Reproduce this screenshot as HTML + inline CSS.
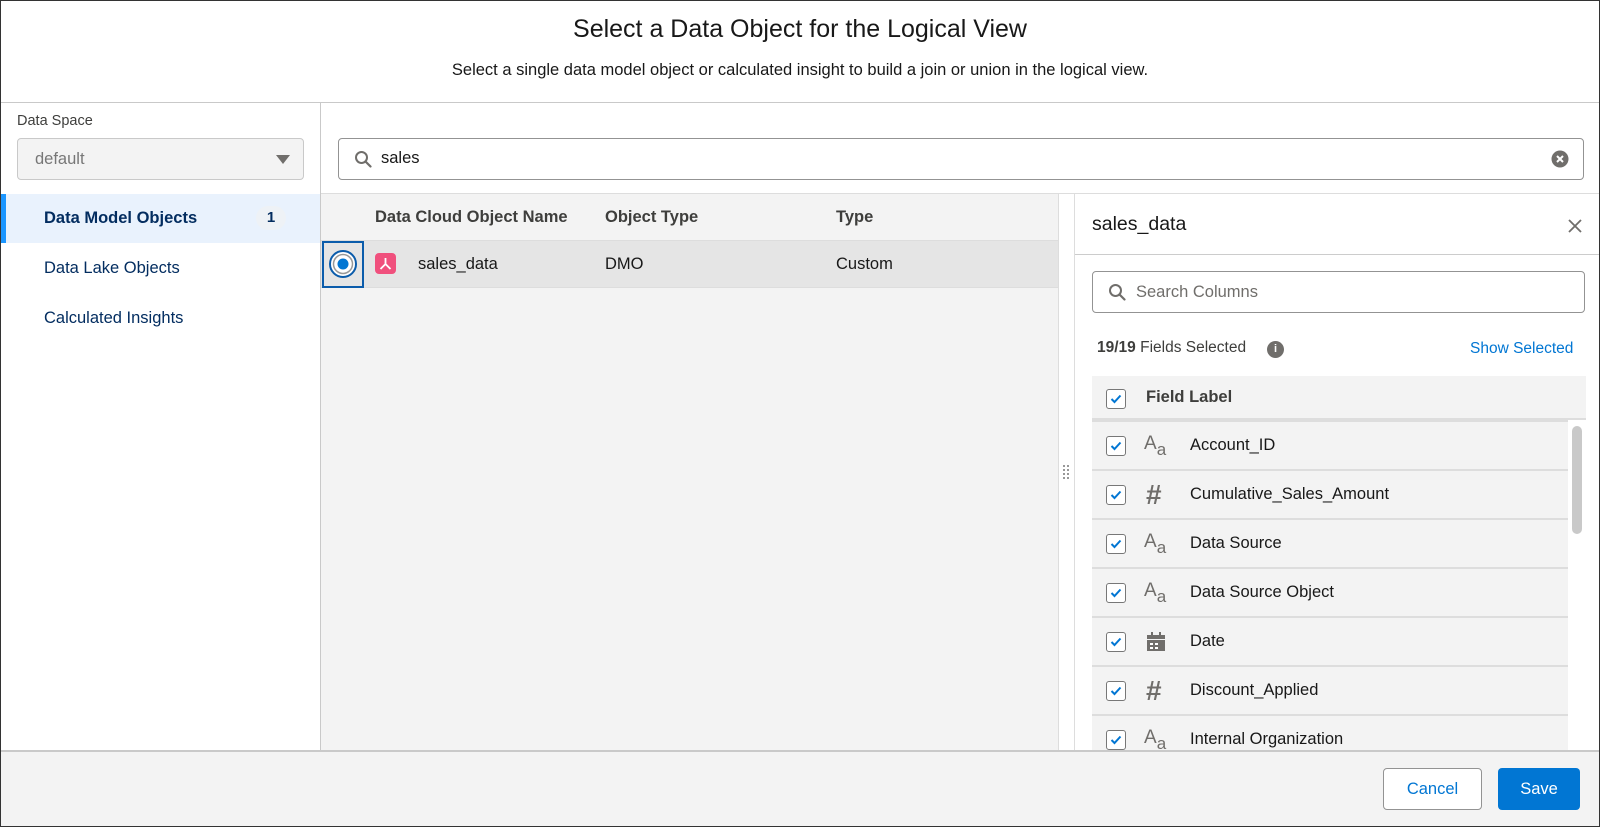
<!DOCTYPE html>
<html><head><meta charset="utf-8"><style>
*{box-sizing:border-box;margin:0;padding:0}
body{width:1600px;height:827px;overflow:hidden;font-family:"Liberation Sans",sans-serif;color:#181818;background:#fff;position:relative;font-size:16.5px}
.a{position:absolute}
.frame{left:0;top:0;width:1600px;height:827px;border:1.5px solid #333;z-index:50;pointer-events:none}
.cb{position:absolute;width:20px;height:20px;border:1.5px solid #777;border-radius:3px;background:#fff}
.cb svg{position:absolute;left:3px;top:4px}
.row{position:absolute;left:1092px;width:476px;height:49px;border-top:2px solid #ddd;background:#f3f3f3}
.row .cb{left:14px;top:14px}
.row .ic{position:absolute;left:52px;top:11px;width:26px;height:26px;color:#706e6b}
.row .t{position:absolute;left:98px;top:14px}
.Aa{font-size:19px}.Aa sub{font-size:17px;vertical-align:-6px}
.hash{font-size:28px;top:8px!important;left:54px!important;font-weight:bold}
</style></head><body>
<div class="a frame"></div>
<div class="a" style="left:0;top:0;width:1600px;height:103px;border-bottom:1px solid #c9c9c9;text-align:center">
<div style="position:absolute;top:15px;width:100%;font-size:25px">Select a Data Object for the Logical View</div>
<div style="position:absolute;top:61px;width:100%;font-size:16.5px">Select a single data model object or calculated insight to build a join or union in the logical view.</div>
</div>
<div class="a" style="left:0;top:103px;width:321px;height:647px;border-right:1px solid #c9c9c9;background:#fff"></div>
<div class="a" style="left:17px;top:113px;font-size:14.5px;color:#3e3e3c">Data Space</div>
<div class="a" style="left:17px;top:138px;width:287px;height:42px;border:1px solid #c9c9c9;border-radius:4px;background:#f3f3f3;color:#777">
<span style="position:absolute;left:17px;top:11px">default</span>
<svg style="position:absolute;right:12px;top:15px" width="16" height="11"><path d="M1 1h14L8 10z" fill="#706e6b"/></svg></div>
<div class="a" style="left:0;top:194px;width:320px;height:49px;background:#e9f2fd;border-left:6px solid #1b96ff"></div>
<div class="a" style="left:44px;top:209px;color:#032d60;font-weight:bold">Data Model Objects</div>
<div class="a" style="left:256px;top:206px;width:30px;height:24px;border-radius:12px;background:#eef2f6;text-align:center;line-height:24px;font-weight:bold;font-size:15px;color:#032d60">1</div>
<div class="a" style="left:44px;top:259px;color:#032d60">Data Lake Objects</div>
<div class="a" style="left:44px;top:309px;color:#032d60">Calculated Insights</div>
<div class="a" style="left:321px;top:103px;width:1279px;height:91px;background:#fff;border-bottom:1px solid #ddd"></div>
<div class="a" style="left:338px;top:138px;width:1246px;height:42px;border:1px solid #939393;border-radius:4px;background:#fff">
<svg style="position:absolute;left:15px;top:11px" width="18" height="18" viewBox="0 0 18 18"><circle cx="7.5" cy="7.5" r="5.5" fill="none" stroke="#706e6b" stroke-width="2"/><path d="M11.5 11.5l5 5" stroke="#706e6b" stroke-width="2.2" stroke-linecap="round"/></svg>
<span style="position:absolute;left:42px;top:10px">sales</span>
<svg style="position:absolute;right:14px;top:11px" width="18" height="18"><circle cx="9" cy="9" r="8.5" fill="#706e6b"/><path d="M6 6l6 6M12 6l-6 6" stroke="#fff" stroke-width="2"/></svg></div>
<div class="a" style="left:321px;top:194px;width:737px;height:556px;background:#f3f3f3"></div>
<div class="a" style="left:321px;top:240px;width:737px;height:48px;background:#e5e5e5;border-bottom:1px solid #ddd;border-top:1px solid #ddd"></div>
<div class="a" style="left:375px;top:208px;font-weight:bold;color:#3e3e3c">Data Cloud Object Name</div>
<div class="a" style="left:605px;top:208px;font-weight:bold;color:#3e3e3c">Object Type</div>
<div class="a" style="left:836px;top:208px;font-weight:bold;color:#3e3e3c">Type</div>
<div class="a" style="left:322px;top:241px;width:42px;height:47px;border:2.5px solid #0b5cab;background:#e5e5e5"></div>
<svg class="a" style="left:327px;top:248px" width="32" height="32"><circle cx="16" cy="16" r="13" fill="#fff" stroke="#0b5cab" stroke-width="2"/><circle cx="16" cy="16" r="9.5" fill="none" stroke="#999" stroke-width="1.5"/><circle cx="16" cy="16" r="5.5" fill="#0176d3"/></svg>
<div class="a" style="left:375px;top:253px;width:21px;height:21px;background:#f0507d;border-radius:4px"><svg width="21" height="21"><path d="M10.5 5v6M10.5 11l-5 5M10.5 11l5 5" stroke="#fff" stroke-width="1.8" fill="none"/></svg></div>
<div class="a" style="left:418px;top:255px">sales_data</div>
<div class="a" style="left:605px;top:255px">DMO</div>
<div class="a" style="left:836px;top:255px">Custom</div>
<div class="a" style="left:1058px;top:194px;width:17px;height:556px;background:#fff;border-left:1px solid #ddd;border-right:1px solid #ddd"></div>
<svg class="a" style="left:1062px;top:464px" width="8" height="16"><g fill="#777"><circle cx="2" cy="2" r="1"/><circle cx="6" cy="2" r="1"/><circle cx="2" cy="6" r="1"/><circle cx="6" cy="6" r="1"/><circle cx="2" cy="10" r="1"/><circle cx="6" cy="10" r="1"/><circle cx="2" cy="14" r="1"/><circle cx="6" cy="14" r="1"/></g></svg>
<div class="a" style="left:1075px;top:194px;width:525px;height:556px;background:#fff"></div>
<div class="a" style="left:1075px;top:254px;width:525px;height:1px;background:#ccc"></div>
<div class="a" style="left:1092px;top:213px;font-size:19.5px">sales_data</div>
<svg class="a" style="left:1568px;top:219px" width="14" height="14"><path d="M1 1l12 12M13 1L1 13" stroke="#706e6b" stroke-width="1.8"/></svg>
<div class="a" style="left:1092px;top:271px;width:493px;height:42px;border:1px solid #939393;border-radius:4px">
<svg style="position:absolute;left:15px;top:11px" width="18" height="18" viewBox="0 0 18 18"><circle cx="7.5" cy="7.5" r="5.5" fill="none" stroke="#706e6b" stroke-width="2"/><path d="M11.5 11.5l5 5" stroke="#706e6b" stroke-width="2.2" stroke-linecap="round"/></svg>
<span style="position:absolute;left:43px;top:11px;color:#706e6b">Search Columns</span></div>
<div class="a" style="left:1097px;top:339px;font-size:15.5px;color:#3e3e3c"><b>19/19</b> Fields Selected</div>
<div class="a" style="left:1267px;top:341px;width:17px;height:17px;border-radius:50%;background:#706e6b;color:#fff;font-size:11px;font-weight:bold;text-align:center;line-height:17px">i</div>
<div class="a" style="left:1470px;top:340px;font-size:15.5px;color:#0176d3">Show Selected</div>
<div class="a" style="left:1092px;top:376px;width:494px;height:44px;background:#f3f3f3;border-bottom:2px solid #ddd">
<div class="cb" style="left:14px;top:13px"><svg width="12" height="10"><path d="M1.5 5l3 3 6-6.5" stroke="#0176d3" stroke-width="2" fill="none"/></svg></div>
<span style="position:absolute;left:54px;top:12px;font-weight:bold;color:#3e3e3c">Field Label</span></div>
<div class="a" style="left:1568px;top:420px;width:18px;height:330px;background:#fff"></div>
<div class="a" style="left:1572px;top:426px;width:10px;height:108px;border-radius:5px;background:#c9c9c9"></div>

<div class="row" style="top:420px"><div class="cb"><svg width="12" height="10"><path d="M1.5 5l3 3 6-6.5" stroke="#0176d3" stroke-width="2" fill="none"/></svg></div><div class="ic Aa">A<sub>a</sub></div><div class="t">Account_ID</div></div>
<div class="row" style="top:469px"><div class="cb"><svg width="12" height="10"><path d="M1.5 5l3 3 6-6.5" stroke="#0176d3" stroke-width="2" fill="none"/></svg></div><div class="ic hash">#</div><div class="t">Cumulative_Sales_Amount</div></div>
<div class="row" style="top:518px"><div class="cb"><svg width="12" height="10"><path d="M1.5 5l3 3 6-6.5" stroke="#0176d3" stroke-width="2" fill="none"/></svg></div><div class="ic Aa">A<sub>a</sub></div><div class="t">Data Source</div></div>
<div class="row" style="top:567px"><div class="cb"><svg width="12" height="10"><path d="M1.5 5l3 3 6-6.5" stroke="#0176d3" stroke-width="2" fill="none"/></svg></div><div class="ic Aa">A<sub>a</sub></div><div class="t">Data Source Object</div></div>
<div class="row" style="top:616px"><div class="cb"><svg width="12" height="10"><path d="M1.5 5l3 3 6-6.5" stroke="#0176d3" stroke-width="2" fill="none"/></svg></div><div class="ic"><svg width="22" height="24" style="margin:2px"><rect x="5" y="1" width="2" height="4" fill="#706e6b"/><rect x="13" y="1" width="2" height="4" fill="#706e6b"/><rect x="1" y="4" width="18" height="4" fill="#706e6b"/><rect x="1" y="9" width="18" height="11" fill="#706e6b"/><g fill="#fff"><rect x="4" y="12" width="3" height="2"/><rect x="9" y="12" width="3" height="2"/><rect x="4" y="16" width="3" height="2"/><rect x="9" y="16" width="3" height="2"/></g></svg></div><div class="t">Date</div></div>
<div class="row" style="top:665px"><div class="cb"><svg width="12" height="10"><path d="M1.5 5l3 3 6-6.5" stroke="#0176d3" stroke-width="2" fill="none"/></svg></div><div class="ic hash">#</div><div class="t">Discount_Applied</div></div>
<div class="row" style="top:714px"><div class="cb"><svg width="12" height="10"><path d="M1.5 5l3 3 6-6.5" stroke="#0176d3" stroke-width="2" fill="none"/></svg></div><div class="ic Aa">A<sub>a</sub></div><div class="t">Internal Organization</div></div>
<div class="a" style="left:0;top:750px;width:1600px;height:77px;background:#f3f3f3;border-top:2px solid #c9c9c9;z-index:5">
<div style="position:absolute;left:1383px;top:16px;width:99px;height:42px;border:1px solid #939393;border-radius:4px;background:#fff;color:#0176d3;text-align:center;line-height:40px">Cancel</div>
<div style="position:absolute;left:1498px;top:16px;width:82px;height:42px;border-radius:4px;background:#0176d3;color:#fff;text-align:center;line-height:42px">Save</div>
</div>
</body></html>
